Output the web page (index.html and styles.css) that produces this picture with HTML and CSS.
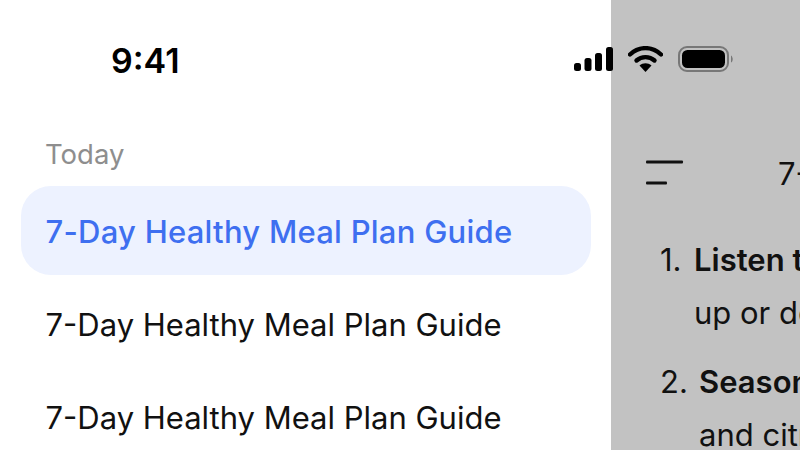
FILE: index.html
```html
<!DOCTYPE html>
<html lang="en">
<head>
    <meta charset="UTF-8">
    <title>Chat history</title>
    <link rel="stylesheet" href="styles.css">
</head>
<body>
    <div class="screen">
        <aside class="sidebar">
            <div class="section-label">Today</div>
            <div class="history-item active">7-Day Healthy Meal Plan Guide</div>
            <div class="history-item">7-Day Healthy Meal Plan Guide</div>
            <div class="history-item">7-Day Healthy Meal Plan Guide</div>
        </aside>

        <main class="chat">
            <div class="chat-header">
                <svg class="menu-icon" width="38" height="26" viewBox="0 0 38 26">
                    <rect x="0" y="0.5" width="37" height="3" rx="1" fill="#111"/>
                    <rect x="0" y="21.5" width="21" height="3" rx="1" fill="#111"/>
                </svg>
                <span class="chat-title">7-Day Healthy Meal Plan Guide</span>
            </div>
            <ol class="answer">
                <li class="first"><span class="num">1.</span><p><strong>Listen to your body:</strong> Adjust portions up or down as needed</p></li>
                <li class="second"><span class="num">2.</span><p><strong>Seasonal swaps:</strong> Use fresh berries and citrus in winter</p></li>
            </ol>
        </main>

        <!-- status bar runs over both panels -->
        <div class="status-bar">
            <span class="time">9:41</span>
            <div class="status-icons">
                <svg width="40" height="26" viewBox="0 0 40 26">
                    <rect x="1" y="17" width="7" height="8" rx="2.5" fill="#000"/>
                    <rect x="11.500" y="12" width="7" height="13" rx="2.5" fill="#000"/>
                    <rect x="22" y="7" width="7" height="18" rx="2.5" fill="#000"/>
                    <rect x="33" y="1" width="7" height="24" rx="2.5" fill="#000"/>
                </svg>
                <svg width="35" height="26" viewBox="0 0 35 26">
                    <path d="M2 8.500C11 0 24 0 33 8.500" fill="none" stroke="#000" stroke-width="4.400" stroke-linecap="round"/>
                    <path d="M8.500 14.500C13.500 10 21.500 10 26.500 14.500" fill="none" stroke="#000" stroke-width="4.400" stroke-linecap="round"/>
                    <path d="M11.500 19.500C15 16.500 20 16.500 23.500 19.500L17.500 26Z" fill="#000"/>
                </svg>
                <svg width="56" height="26" viewBox="0 0 56 26">
                    <rect x="1" y="1" width="49" height="24" rx="8" fill="none" stroke="#777" stroke-width="2"/>
                    <rect x="4" y="4" width="43" height="18" rx="5.500" fill="#000"/>
                    <path d="M53 9.500C55 10.500 55.500 15.500 53 16.500Z" fill="#777"/>
                </svg>
            </div>
        </div>
    </div>
</body>
</html>
```

FILE: styles.css
```css
* {
    margin: 0;
    padding: 0;
    box-sizing: border-box;
}

body {
    font-family: Inter, "Liberation Sans", sans-serif;
    background: white;
    overflow: hidden;
}

.screen {
    position: relative;
    display: flex;
    width: 800px;
    height: 450px;
    overflow: hidden;
}

.sidebar {
    width: 611px;
    flex-shrink: 0;
    padding: 139px 20px 0 21px;
    background: white;
}

.section-label {
    padding-left: 24px;
    font-size: 27.5px;
    line-height: 30px;
    color: #8e8e8e;
    margin-bottom: 17px;
}

.history-item {
    height: 89px;
    padding: 2px 0 0 24.5px;
    display: flex;
    align-items: center;
    font-size: 31px;
    color: #111;
    white-space: nowrap;
    margin-bottom: 4px;
}

.history-item.active {
    background: #edf2ff;
    border-radius: 30px;
    color: #3e6ff0;
    font-weight: 500;
    letter-spacing: 0.25px;
}

.chat {
    flex: 1;
    min-width: 0;
    background: #c2c2c2;
    color: #111;
    padding-top: 160px;
    overflow: hidden;
}

.chat-header {
    display: flex;
    align-items: center;
    height: 26px;
    padding-left: 35px;
    white-space: nowrap;
}

.menu-icon {
    flex-shrink: 0;
}

.chat-title {
    margin-left: 94px;
    font-size: 31px;
}

.answer {
    list-style: none;
    margin-top: 47px;
    width: 640px;
    padding-left: 49px;
    font-size: 31px;
    line-height: 53px;
}

.answer li {
    display: flex;
    margin-bottom: 16px;
}

.num {
    width: 34px;
    flex-shrink: 0;
}

.second .num {
    width: 39px;
}

.answer strong {
    font-weight: 600;
}

.status-bar {
    position: absolute;
    top: 0;
    left: 0;
    width: 100%;
    height: 100px;
    padding: 43px 66px 0 111px;
    display: flex;
    justify-content: space-between;
    align-items: flex-start;
}

.time {
    font-size: 34px;
    line-height: 36px;
    font-weight: 600;
    color: #000;
}

.status-icons {
    display: flex;
    align-items: center;
    gap: 15px;
    margin-top: 3px;
}
```
